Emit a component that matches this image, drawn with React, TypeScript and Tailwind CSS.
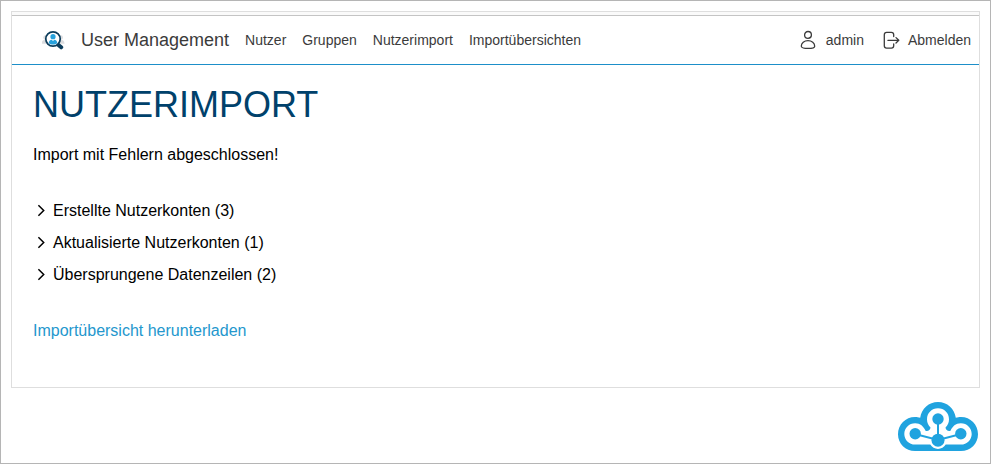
import React from "react";

const navItems = ["Nutzer", "Gruppen", "Nutzerimport", "Importübersichten"];

const sections = [
  { label: "Erstellte Nutzerkonten", count: 3 },
  { label: "Aktualisierte Nutzerkonten", count: 1 },
  { label: "Übersprungene Datenzeilen", count: 2 },
];

function AppLogo() {
  return (
    <svg width="24" height="20" viewBox="0 0 24 20" fill="none">
      <g fill="#dcdddf">
        <circle cx="3.500" cy="7.500" r="2.200" />
        <path d="M-.5 13.800c0-2.800 1.500-4 4-4h2v4z" />
        <circle cx="18.800" cy="7.500" r="2.200" />
        <path d="M22.500 13.800c0-2.800-1.500-4-4-4h-2v4z" />
      </g>
      <circle cx="11" cy="9" r="7.200" fill="#fff" stroke="#0b3c5b" strokeWidth="1.700" />
      <circle cx="11" cy="6.700" r="2.600" fill="#27a1dc" />
      <path d="M6.700 13c.3-2.300 1.500-3.200 3-3.300L11 11l1.300-1.300c1.500.1 2.700 1 3 3.300-1 1-2.500 1.600-4.300 1.600S7.700 14 6.700 13z" fill="#27a1dc" />
      <path d="M16.700 15.200l2.500 2.100" stroke="#0b3c5b" strokeWidth="4" strokeLinecap="round" />
    </svg>
  );
}

function UserIcon() {
  return (
    <svg width="16" height="20" viewBox="0 0 16 20" fill="none" stroke="#3b3b3b" strokeWidth="1.300">
      <circle cx="8" cy="4.900" r="3.400" />
      <path d="M1.300 16.200c0-3 2.900-5.500 6.700-5.500s6.700 2.500 6.700 5.500c0 1.500-2.900 2.200-6.700 2.200s-6.700-.7-6.700-2.200z" />
    </svg>
  );
}

function LogoutIcon() {
  return (
    <svg width="17" height="18" viewBox="0 0 17 18" fill="none" stroke="#3b3b3b" strokeWidth="1.300" strokeLinecap="round" strokeLinejoin="round">
      <path d="M10.700 5.500V3.700c0-1.500-.8-2.300-2.300-2.300H3.600c-1.500 0-2.300.8-2.300 2.300v11.100c0 1.500.8 2.300 2.300 2.300h4.800c1.500 0 2.300-.8 2.300-2.300v-1.800" />
      <path d="M4.900 9.300H15.600M13 6.600L15.800 9.300 13 12" />
    </svg>
  );
}

function CloudLogo() {
  return (
    <svg width="80" height="49" viewBox="0 0 80 49">
      <path
        d="M17 49C7.500 49 0 41.500 0 32.200 0 22.500 7.500 15 17 15c2 0 3.500.2 5.200.8C23.500 6.500 30.800 0 40 0s16.500 6.500 17.800 15.800c1.700-.6 3.200-.8 5.200-.8 9.500 0 17 7.500 17 17.200C80 41.500 72.500 49 63 49z"
        fill="#20a3df"
      />
      <path
        d="M17.200 42.600C11 42.600 6.300 37.800 6.300 32s4.700-10.700 10.900-10.700c5.200 0 8.200 3 10.300 7.400 2 1.200 4.800-.4 5-3.200-2.300-2.300-3.500-4.900-3.500-8.300C29 11 33.800 6.300 40 6.300S51 11 51 17.200c0 3.400-1.200 6-3.500 8.300.2 2.800 3 4.400 5 3.200 2.100-4.400 5.100-7.400 10.300-7.400 6.200 0 10.900 4.900 10.900 10.700s-4.700 10.600-10.900 10.600H47.700a9 9 0 0 1-15.400 0z"
        fill="#fff"
      />
      <path d="M40 17v21M17 32l23 6 23-6" fill="none" stroke="#20a3df" strokeWidth="2" />
      <g fill="#20a3df">
        <circle cx="40" cy="17" r="5.700" />
        <circle cx="17.200" cy="31.800" r="5.700" />
        <circle cx="62.800" cy="31.800" r="5.700" />
        <circle cx="40" cy="38.200" r="6.500" />
      </g>
    </svg>
  );
}

export default function App() {
  return (
    <div className="flex h-[464px] w-[991px] flex-col border border-[#b5b5b5] bg-white px-2.5 pt-2.5 font-['Liberation_Sans',Arial,sans-serif] text-base text-black">
      <div className="h-[377px] w-[969px] border border-[#dedede]">
        <div className="h-1 border-b border-[#c4c4c4] bg-[#fafafa]" />
        <header className="flex h-[49px] items-center border-b border-[#1d8fc9] pr-2 pl-[30px] text-sm text-[#3b3b3b]">
          <AppLogo />
          <span className="ml-[15px] text-lg">User Management</span>
          <nav className="ml-4 flex gap-4">
            {navItems.map((item) => (
              <a key={item}>{item}</a>
            ))}
          </nav>
          <div className="ml-auto flex items-center">
            <UserIcon />
            <span className="ml-2.5">admin</span>
            <span className="mr-2 ml-[19px]">
              <LogoutIcon />
            </span>
            <span>Abmelden</span>
          </div>
        </header>
        <main className="px-[21px] pt-5">
          <h1 className="text-4xl leading-10 text-[#00416b]">NUTZERIMPORT</h1>
          <p className="mt-[18px] leading-6">Import mit Fehlern abgeschlossen!</p>
          <ul className="mt-7">
            {sections.map((section) => (
              <li key={section.label} className="flex h-8 items-center">
                <svg className="mr-1 w-4" height="16" viewBox="0 0 16 16" fill="none" stroke="#000" strokeWidth="1.500">
                  <path d="M5.400 2.200l5.300 5.300-5.300 5.300" />
                </svg>
                <span>
                  {section.label} ({section.count})
                </span>
              </li>
            ))}
          </ul>
          <a className="mt-7 block leading-6 text-[#2497cd]">Importübersicht herunterladen</a>
        </main>
      </div>
      <footer className="mt-3.5 flex justify-end pr-0.5">
        <CloudLogo />
      </footer>
    </div>
  );
}
